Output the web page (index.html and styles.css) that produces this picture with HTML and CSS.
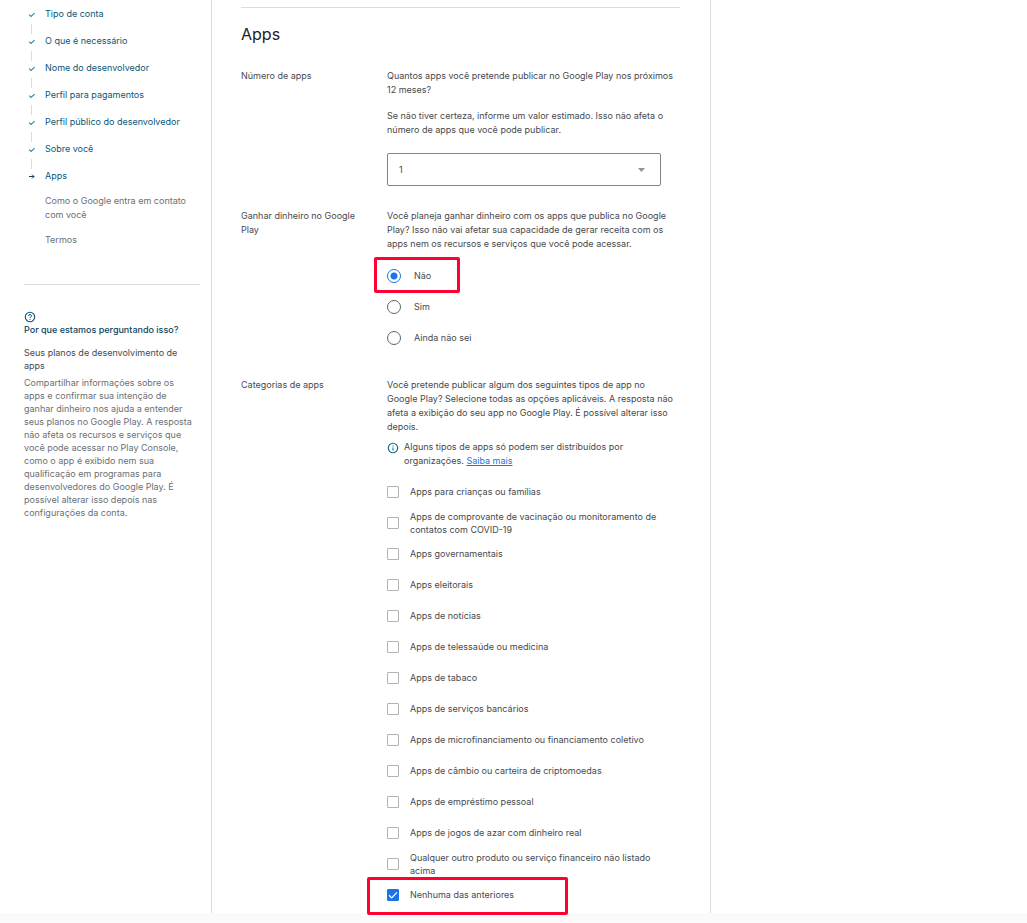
FILE: index.html
```html
<!DOCTYPE html>
<html lang="pt-BR">
<head>
    <meta charset="UTF-8">
    <meta name="viewport" content="width=device-width, initial-scale=1.0">
    <title>Google Play Console</title>
    <link rel="stylesheet" href="styles.css">
</head>
<body>
    <svg class="symbols" xmlns="http://www.w3.org/2000/svg">
        <symbol id="check" viewBox="0 0 8 8">
            <path d="M1.2 4.7L3 6.4L6.6 3.2" fill="none" stroke="currentColor" stroke-width="1.1"/>
        </symbol>
        <symbol id="arrow" viewBox="0 0 8 8">
            <path d="M1 4.5H6M4 2.5L6 4.5L4 6.5" fill="none" stroke="currentColor" stroke-width="1"/>
        </symbol>
    </svg>

    <div class="page">
        <aside class="sidebar">
            <nav>
                <ul class="steps">
                    <li class="step"><svg class="step-icon"><use href="#check"/></svg><a href="#">Tipo de conta</a></li>
                    <li class="step"><svg class="step-icon"><use href="#check"/></svg><a href="#">O que é necessário</a></li>
                    <li class="step"><svg class="step-icon"><use href="#check"/></svg><a href="#">Nome do desenvolvedor</a></li>
                    <li class="step"><svg class="step-icon"><use href="#check"/></svg><a href="#">Perfil para pagamentos</a></li>
                    <li class="step"><svg class="step-icon"><use href="#check"/></svg><a href="#">Perfil público do desenvolvedor</a></li>
                    <li class="step"><svg class="step-icon"><use href="#check"/></svg><a href="#">Sobre você</a></li>
                    <li class="step current"><svg class="step-icon"><use href="#arrow"/></svg><a href="#">Apps</a></li>
                    <li class="step pending">Como o Google entra em contato com você</li>
                    <li class="step pending">Termos</li>
                </ul>
            </nav>

            <section class="help">
                <svg class="help-icon" viewBox="0 0 12 12">
                    <circle cx="6" cy="6" r="4.7" fill="none" stroke="currentColor" stroke-width="1.1"/>
                    <path d="M4.5 4.9C4.5 3 7.5 3 7.5 4.9C7.5 5.9 6 5.9 6 7.1M6 7.9V8.9" fill="none" stroke="currentColor" stroke-width="1"/>
                </svg>
                <h2>Por que estamos perguntando isso?</h2>
                <h3>Seus planos de desenvolvimento de apps</h3>
                <p>Compartilhar informações sobre os apps e confirmar sua intenção de ganhar dinheiro nos ajuda a entender seus planos no Google Play. A resposta não afeta os recursos e serviços que você pode acessar no Play Console, como o app é exibido nem sua qualificação em programas para desenvolvedores do Google Play. É possível alterar isso depois nas configurações da conta.</p>
            </section>
        </aside>

        <main class="content">
            <h1>Apps</h1>

            <section class="row">
                <label class="row-label" for="num-apps">Número de apps</label>
                <div class="row-body">
                    <p>Quantos apps você pretende publicar no Google Play nos próximos 12 meses?</p>
                    <p>Se não tiver certeza, informe um valor estimado. Isso não afeta o número de apps que você pode publicar.</p>
                    <div class="select">
                        <select id="num-apps">
                            <option>1</option>
                        </select>
                        <svg class="caret" viewBox="0 0 7 4"><path d="M0 0H7L3.5 4Z" fill="currentColor"/></svg>
                    </div>
                </div>
            </section>

            <section class="row" role="radiogroup" aria-labelledby="money-label">
                <span class="row-label" id="money-label">Ganhar dinheiro no Google Play</span>
                <div class="row-body">
                    <p>Você planeja ganhar dinheiro com os apps que publica no Google Play? Isso não vai afetar sua capacidade de gerar receita com os apps nem os recursos e serviços que você pode acessar.</p>
                    <div class="radios">
                        <label class="option marked"><input type="radio" name="money" checked><span>Não</span></label>
                        <label class="option"><input type="radio" name="money"><span>Sim</span></label>
                        <label class="option"><input type="radio" name="money"><span>Ainda não sei</span></label>
                    </div>
                </div>
            </section>

            <section class="row" role="group" aria-labelledby="cat-label">
                <span class="row-label" id="cat-label">Categorias de apps</span>
                <div class="row-body">
                    <p>Você pretende publicar algum dos seguintes tipos de app no Google Play? Selecione todas as opções aplicáveis. A resposta não afeta a exibição do seu app no Google Play. É possível alterar isso depois.</p>
                    <div class="info">
                        <svg class="info-icon" viewBox="0 0 12 12">
                            <circle cx="6" cy="6" r="4.7" fill="none" stroke="currentColor" stroke-width="1.1"/>
                            <path d="M6 5.4V8.6M6 3.4V4.5" fill="none" stroke="currentColor" stroke-width="1"/>
                        </svg>
                        <span>Alguns tipos de apps só podem ser distribuídos por organizações. <a href="#">Saiba mais</a></span>
                    </div>
                    <div class="checks">
                        <label class="option"><input type="checkbox"><span>Apps para crianças ou famílias</span></label>
                        <label class="option"><input type="checkbox"><span>Apps de comprovante de vacinação ou monitoramento de contatos com COVID-19</span></label>
                        <label class="option"><input type="checkbox"><span>Apps governamentais</span></label>
                        <label class="option"><input type="checkbox"><span>Apps eleitorais</span></label>
                        <label class="option"><input type="checkbox"><span>Apps de notícias</span></label>
                        <label class="option"><input type="checkbox"><span>Apps de telessaúde ou medicina</span></label>
                        <label class="option"><input type="checkbox"><span>Apps de tabaco</span></label>
                        <label class="option"><input type="checkbox"><span>Apps de serviços bancários</span></label>
                        <label class="option"><input type="checkbox"><span>Apps de microfinanciamento ou financiamento coletivo</span></label>
                        <label class="option"><input type="checkbox"><span>Apps de câmbio ou carteira de criptomoedas</span></label>
                        <label class="option"><input type="checkbox"><span>Apps de empréstimo pessoal</span></label>
                        <label class="option"><input type="checkbox"><span>Apps de jogos de azar com dinheiro real</span></label>
                        <label class="option"><input type="checkbox"><span>Qualquer outro produto ou serviço financeiro não listado acima</span></label>
                        <label class="option marked"><input type="checkbox" checked><span>Nenhuma das anteriores</span></label>
                    </div>
                </div>
            </section>
        </main>
    </div>
    <footer class="footer"></footer>
</body>
</html>
```

FILE: styles.css
```css
*,
*::before,
*::after {
    box-sizing: border-box;
}

body {
    margin: 0;
    min-height: 100vh;
    display: flex;
    flex-direction: column;
    background: #fff;
    color: #46494d;
    font-family: Inter, Roboto, sans-serif;
    font-size: 9px;
    line-height: 14px;
}

h1, h2, h3, p, ul {
    margin: 0;
    padding: 0;
    font-weight: 400;
}

.symbols {
    display: none;
}

.page {
    display: grid;
    grid-template-columns: 212px minmax(0, 499px);
}

/* Sidebar */
.sidebar {
    border-right: 1px solid #dadce0;
    padding: 7px 11px 0 24px;
}

.steps {
    list-style: none;
    padding-bottom: 37px;
    border-bottom: 1px solid #dadce0;
}

.step {
    position: relative;
    display: flex;
    align-items: center;
    gap: 9px;
    padding-left: 4px;
    margin-bottom: 13px;
}

.step a {
    color: #0b5577;
    text-decoration: none;
}

.step-icon {
    width: 8px;
    height: 8px;
    color: #2b86ac;
}

.current .step-icon {
    color: #0b4560;
}

/* line joining a finished step to the next one */
.step:not(.current):not(.pending)::after {
    content: '';
    position: absolute;
    left: 7px;
    top: 17px;
    height: 10px;
    border-left: 1px solid #dadce0;
}

.step.current {
    margin-bottom: 11px;
}

.pending {
    padding-left: 21px;
    color: #6b6f74;
    margin-bottom: 11px;
}

.step:last-child {
    margin-bottom: 0;
}

.help {
    padding-top: 26px;
    line-height: 13px;
    color: #6b6f74;
}

.help-icon {
    display: block;
    width: 12px;
    height: 12px;
    color: #0b5577;
}

.help h2 {
    font-size: 9px;
    font-weight: 500;
    color: #0b4560;
    margin-bottom: 10px;
}

.help h3 {
    font-size: 9px;
    margin-bottom: 4px;
    color: #46494d;
}

.help p {
    padding-right: 5px;
}

/* Form */
.content {
    border-right: 1px solid #dadce0;
    padding: 7px 30px 3px 29px;
}

h1 {
    border-top: 1px solid #dadce0;
    padding-top: 16px;
    font-size: 16px;
    line-height: 20px;
    color: #202124;
    margin-bottom: 25px;
}

.row {
    display: grid;
    grid-template-columns: 122px minmax(0, 1fr);
    column-gap: 24px;
}

.row + .row {
    margin-top: 23px;
}

.row-body p {
    padding-right: 5px;
}

.row-body p + p {
    margin-top: 12px;
}

.select {
    position: relative;
    width: 274px;
    max-width: 100%;
    margin-top: 16px;
}

.select select {
    appearance: none;
    display: block;
    width: 100%;
    height: 33px;
    padding: 0 11px;
    border: 1px solid #80868b;
    border-radius: 2px;
    background: #fff;
    color: #46494d;
    font: inherit;
}

.caret {
    position: absolute;
    right: 16px;
    top: 15px;
    width: 7px;
    height: 4px;
    color: #909498;
}

.option {
    position: relative;
    display: flex;
    align-items: center;
    height: 31px;
    padding-right: 10px;
    line-height: 13px;
}

.option input {
    appearance: none;
    flex: none;
    margin: 0;
    background: #fff;
}

.radios {
    margin-top: 9px;
    margin-bottom: 2px;
}

.radios .option {
    gap: 13px;
}

.radios input {
    width: 14px;
    height: 14px;
    border: 1px solid #5f6368;
    border-radius: 50%;
}

.radios input:checked {
    border-color: #1a73e8;
    background: radial-gradient(circle, #1a73e8 3px, #fff 4px);
}

.info {
    display: flex;
    gap: 5px;
    margin-top: 6px;
}

.info-icon {
    flex: none;
    width: 12px;
    height: 12px;
    margin-top: 2px;
    color: #0b6a94;
}

.info a {
    color: #1a73e8;
}

.checks {
    margin-top: 8px;
}

.checks .option {
    gap: 11px;
}

.checks input {
    width: 12px;
    height: 12px;
    border: 1px solid #b0b2b5;
    border-radius: 1px;
}

.checks input:checked {
    border-color: #1a73e8;
    background: #1a73e8 url("data:image/svg+xml,%3Csvg xmlns='http://www.w3.org/2000/svg' viewBox='0 0 10 10'%3E%3Cpath d='M1 5.2L3.7 7.9L9 2.4' fill='none' stroke='white' stroke-width='1.3'/%3E%3C/svg%3E") center / 10px 10px no-repeat;
}

/* Highlight frame */
.marked::before {
    content: '';
    position: absolute;
    border: 3px solid #ff0033;
    border-radius: 2px;
    pointer-events: none;
}

.radios .marked::before {
    left: -13px;
    top: -3px;
    width: 86px;
    height: 36px;
}

.checks .marked::before {
    left: -20px;
    top: -2px;
    width: 201px;
    height: 38px;
}

.footer {
    flex: 1;
    background: #fafafa;
}
```
